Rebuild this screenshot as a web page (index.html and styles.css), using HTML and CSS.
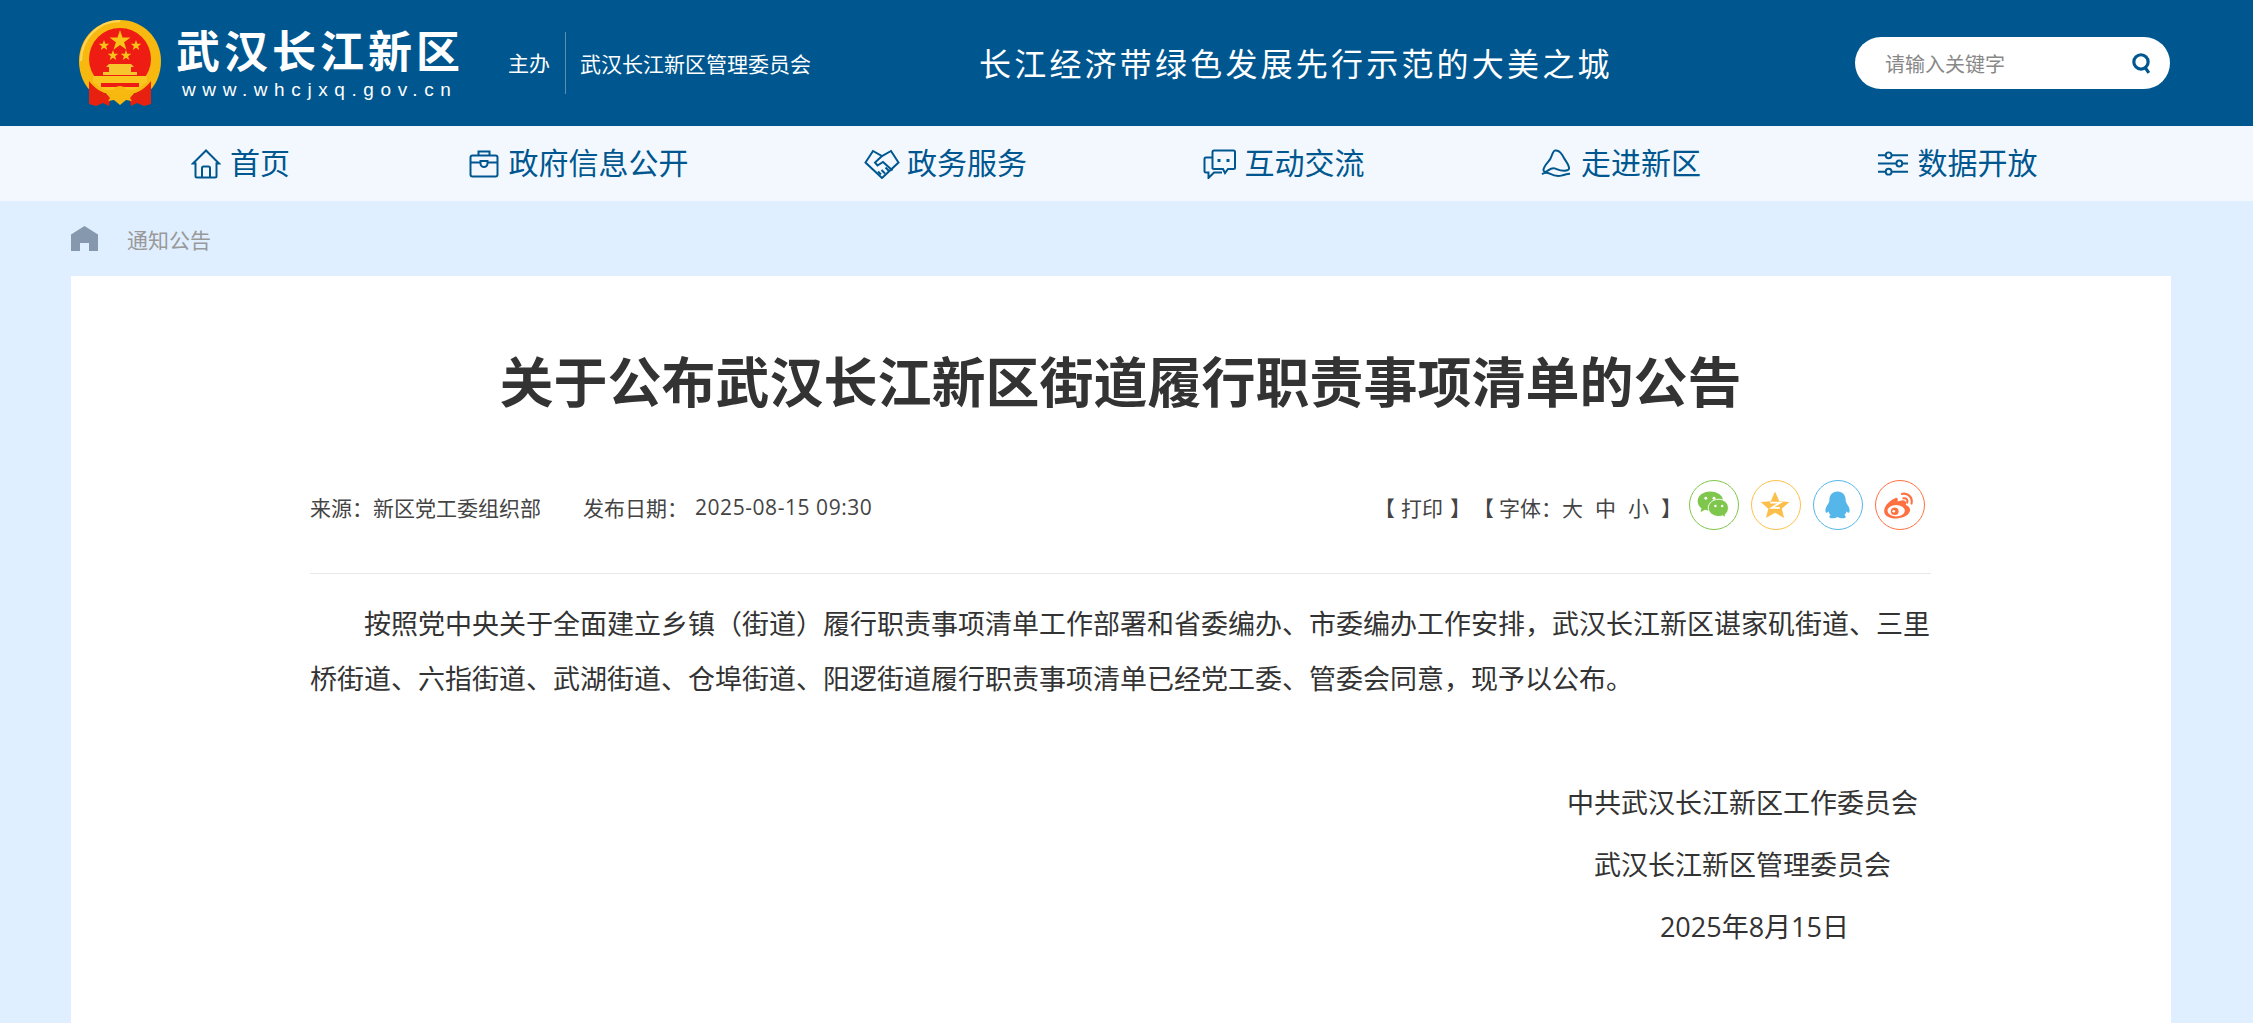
FILE: index.html
```html
<!DOCTYPE html>
<html lang="zh-CN">
<head>
<meta charset="UTF-8">
<title>关于公布武汉长江新区街道履行职责事项清单的公告</title>
<link rel="stylesheet" href="styles.css">
</head>
<body>
<div class="header">
	<svg class="emblem" viewBox="0 0 82 88">
		<path d="M41 1C18 1 0 19 0 42c0 13 5 25 14 32h54c9-7 14-19 14-32C82 19 64 1 41 1z" fill="#f7b90f"/>
		<path d="M41 2C19 2 2 20 2 42" fill="none" stroke="#ffd65a" stroke-width="2"/>
		<circle cx="41" cy="40" r="31" fill="#ee1c12"/>
		<path d="M41 11l2.500 7.500h8l-6.400 4.700 2.400 7.500-6.500-4.600-6.500 4.600 2.400-7.500-6.400-4.700h8z" fill="#f8c418"/>
		<path d="M25 21l1.300 3.800h4l-3.200 2.400 1.200 3.800-3.300-2.300-3.300 2.300 1.200-3.800-3.200-2.400h4zM57 21l1.300 3.800h4l-3.200 2.400 1.200 3.800-3.300-2.300-3.300 2.300 1.200-3.800-3.200-2.400h4zM34 31l1.300 3.800h4l-3.200 2.400 1.200 3.800-3.300-2.300-3.300 2.300 1.200-3.800-3.200-2.400h4zM47 31l1.300 3.800h4l-3.200 2.400 1.200 3.800-3.300-2.300-3.300 2.300 1.200-3.800-3.200-2.400h4z" fill="#f8c418"/>
		<path d="M30 45h22l3 3h-3v5h6v3H24v-3h6v-5h-3z" fill="#f9c52c"/>
		<path d="M14 57h54v6c-4 3-8 6-12 8H26c-4-2-8-5-12-8z" fill="#fbc51f"/>
		<path d="M22 64H60v4H22z" fill="#ee1c12"/>
		<path d="M10 62c5 7 13 12 22 14l-2 11-6-3-7 3-7-2z" fill="#e8200f"/>
		<path d="M72 62c-5 7-13 12-22 14l2 11 6-3 7 3 7-2z" fill="#e8200f"/>
		<path d="M41 67c4 0 6 3 8 5l8 0-6 7 2 3-6-1-6 5-6-5-6 1 2-3-6-7 8 0c2-2 4-5 8-5z" fill="#f7b90f"/>
	</svg>
	<div class="logo">
		<div class="logo-name">武汉长江新区</div>
		<div class="logo-url">www.whcjxq.gov.cn</div>
	</div>
	<div class="sponsor">
		<span class="sponsor-label">主办</span>
		<span class="sponsor-name">武汉长江新区管理委员会</span>
	</div>
	<div class="slogan">长江经济带绿色发展先行示范的大美之城</div>
	<div class="search">
		<span class="search-text">请输入关键字</span>
		<svg class="search-icon" viewBox="0 0 20 20"><circle cx="9.500" cy="8.500" r="6.800" fill="none" stroke="#00578f" stroke-width="3"/><path d="M13.500 14l3.500 5" stroke="#00578f" stroke-width="3" fill="none"/></svg>
	</div>
</div>

<div class="nav">
	<a class="nav-item">
		<svg class="nav-icon icon-home" viewBox="0 0 30 30"><path d="M15 1.500L2 14.500l2.500 0V27a1.500 1.500 0 0 0 1.500 1.500h18a1.500 1.500 0 0 0 1.500-1.500V14.500l2.500 0zM11 28.500V19a1.500 1.500 0 0 1 1.500-1.500h5A1.500 1.500 0 0 1 19 19v9.500"/></svg>
		<span class="nav-text">首页</span>
	</a>
	<a class="nav-item">
		<svg class="nav-icon icon-case" viewBox="0 0 30 30"><rect x="1.500" y="6.500" width="27" height="21" rx="2"/><path d="M9.500 6.500V2.500h11v4M1.500 13.500h10M18.500 13.500h10"/><path d="M11.500 12h7v2.500a3.500 3.500 0 0 1-7 0z"/></svg>
		<span class="nav-text">政府信息公开</span>
	</a>
	<a class="nav-item">
		<svg class="nav-icon icon-hand" viewBox="0 0 36 30"><path d="M18 29L1.500 13.500 9 2l9 5 9-5 7.500 11.500z"/><path d="M18 7l-7 6.500 2.500 3 5.500-3.500 9.500 8.500M17 25.500l-3-3M21 24.500l-3.500-3.500M25 22l-3.500-3.500"/></svg>
		<span class="nav-text">政务服务</span>
	</a>
	<a class="nav-item">
		<svg class="nav-icon icon-talk" viewBox="0 0 33 30"><path d="M9.500 8.500H3a1.500 1.500 0 0 0-1.500 1.500v12A1.500 1.500 0 0 0 3 23.500h2.500v5.500l5.500-5.500h8"/><path d="M9.500 20V3A1.500 1.500 0 0 1 11 1.500h19.500A1.500 1.500 0 0 1 32 3v15.500a1.500 1.500 0 0 1-1.500 1.500H25l-3 4-2-4H11a1.500 1.500 0 0 1-1.500-1.500"/><path d="M16 10v3M25 10v3" stroke-width="3"/></svg>
		<span class="nav-text">互动交流</span>
	</a>
	<a class="nav-item">
		<svg class="nav-icon icon-hill" viewBox="0 0 32 31"><path d="M15 1.500c-2 0-3 5-5 9-2 3-6 6-7 11 0 2 2 2.500 3.500 1.500 3-2 5-4 8-3 3 1 5 2.500 10 2.500 3 0 5-1 5-2.500 0-4-4-8-6-12-2-3-3-7-8.500-6.500z"/><path d="M1.500 26c3-2 5-2 8-.5s8 3 12 2 6-2 9-2"/></svg>
		<span class="nav-text">走进新区</span>
	</a>
	<a class="nav-item">
		<svg class="nav-icon icon-tune" viewBox="0 0 33 25"><path d="M1 4h8M15 4h17M1 12.500h19M26 12.500h6M1 21h8M15 21h17"/><circle cx="12" cy="4" r="3"/><circle cx="23" cy="12.500" r="3"/><circle cx="12" cy="21" r="3"/></svg>
		<span class="nav-text">数据开放</span>
	</a>
</div>

<div class="crumb">
	<svg class="crumb-home" viewBox="0 0 27 25"><path d="M13.500 0L0 8.500V25h9v-8h9v8h9V8.500z" fill="#8598ae"/></svg>
	<span class="crumb-text">通知公告</span>
</div>

<div class="card">
	<h1 class="title">关于公布武汉长江新区街道履行职责事项清单的公告</h1>
	<div class="meta">
		<span class="meta-from">来源：新区党工委组织部</span>
		<span class="meta-date">发布日期：</span>
		<span class="meta-time">2025-08-15 09:30</span>
		<div class="tools">
			<span class="tool-group">【<i class="tool-print">打印</i>】</span>
			<span class="tool-group">【<i class="tool-font">字体：</i><i class="tool-size">大</i><i class="tool-size">中</i><i class="tool-size">小</i>】</span>
		</div>
		<div class="share">
			<a class="share-btn share-wx">
				<svg viewBox="0 0 50 50"><path d="M21 11c-7.500 0-13 4.500-13 10 0 3 1.500 5.500 4 7.500l-1 4 4.500-2.500c2 .7 4 1 6 1 7 0 13-4.500 13-10s-5.500-10-13.500-10z" fill="#7fc64c"/><path d="M30 19c-6 0-11 4-11 9s5 9 11 9c1.500 0 3-.3 4-.7l3.500 2-1-3.300c2.500-1.500 3.500-4.500 3.500-7 0-5-4.500-9-10-9z" fill="#7fc64c" stroke="#fff" stroke-width="1"/><circle cx="16.500" cy="18" r="1.500" fill="#fff"/><circle cx="25" cy="18" r="1.500" fill="#fff"/><circle cx="26.500" cy="26" r="1.300" fill="#fff"/><circle cx="33.500" cy="26" r="1.300" fill="#fff"/></svg>
			</a>
			<a class="share-btn share-qz">
				<svg viewBox="0 0 50 50"><path d="M24 11l4.500 10 10.500 1-8 7 2.500 9.500L24 33l-9.500 5.500L17 29l-8-7 10.500-1z" fill="#fdbf4b"/><path d="M19 22.500h10.500L20.500 28h8.500" fill="none" stroke="#fff" stroke-width="1.800"/></svg>
			</a>
			<a class="share-btn share-qq">
				<svg viewBox="0 0 50 50"><path d="M24.500 11c-5.500 0-8.500 4-8.500 9 0 2-1.500 4-3 6.500-1.500 3-1.500 6 0 6.500 1 .3 1.500-.8 2-1.500.5 2 1.500 3.500 2.500 4-1.500.7-2 2-1 2.800 1.500 1 6 .5 8-.8 2 1.300 6.500 1.800 8 .8 1-.8.500-2.100-1-2.800 1-.5 2-2 2.500-4 .5.7 1 1.800 2 1.500 1.500-.5 1.500-3.500 0-6.500-1.500-2.500-3-4.500-3-6.500 0-5-3-9-8.500-9z" fill="#55b6ea"/></svg>
			</a>
			<a class="share-btn share-wb">
				<svg viewBox="0 0 50 50"><path d="M20 18c-5 1.500-12 8-11.500 14 .5 5 7 7.500 13.500 7 7-.5 13.500-4 13.500-9 0-3-3-4.500-4.500-5 1-2.500 0-5-3-5-2 0-4 1-5.500 1.500.8-3-.5-5-2.500-3.500z" fill="#ff7040"/><ellipse cx="21" cy="31" rx="9" ry="6" fill="#fff"/><circle cx="19.500" cy="31.500" r="4" fill="#ff7040"/><circle cx="18.500" cy="31.500" r="1.400" fill="#fff"/><path d="M27 13.500c6-1.500 11.500 3.500 10 10M28.500 18c3-.5 5 1.500 4 4.500" fill="none" stroke="#ff7040" stroke-width="2.200" stroke-linecap="round"/></svg>
			</a>
		</div>
	</div>
	<div class="content">
		<p class="para">按照党中央关于全面建立乡镇（街道）履行职责事项清单工作部署和省委编办、市委编办工作安排，武汉长江新区谌家矶街道、三里桥街道、六指街道、武湖街道、仓埠街道、阳逻街道履行职责事项清单已经党工委、管委会同意，现予以公布。</p>
		<div class="sign">
			<p class="sign-1">中共武汉长江新区工作委员会</p>
			<p class="sign-2">武汉长江新区管理委员会</p>
			<p class="sign-3">2025年8月15日</p>
		</div>
	</div>
</div>
</body>
</html>
```

FILE: styles.css
```css
* {
	box-sizing: border-box;
}
html, body {
	margin: 0;
	padding: 0;
}
body {
	background: #dfefff;
	font-family: "Open Sans", "Noto Sans CJK SC", sans-serif;
	color: #333;
}
p, h1 {
	margin: 0;
}
i {
	font-style: normal;
}

.header {
	display: flex;
	align-items: center;
	height: 126px;
	padding-left: 79px;
	background: #00578f;
	color: #fff;
}
.emblem {
	width: 82px;
	height: 88px;
	flex: none;
}
.logo {
	margin-left: 15px;
	width: 291px;
}
.logo-name {
	font-family: "Noto Sans CJK SC", serif;
	font-size: 44px;
	font-weight: 700;
	line-height: 46px;
	letter-spacing: 4px;
	white-space: nowrap;
}
.logo-url {
	margin-top: 7px;
	margin-left: 6px;
	font-family: "Liberation Sans", sans-serif;
	font-size: 19px;
	line-height: 22px;
	letter-spacing: 6.6px;
	white-space: nowrap;
}
.sponsor {
	display: flex;
	align-items: center;
	margin-left: 41px;
	font-size: 21px;
}
.sponsor-label {
	padding-right: 15px;
	line-height: 62px;
	border-right: 1px solid #5a8fb4;
}
.sponsor-name {
	padding-left: 14px;
}
.slogan {
	margin-left: 168px;
	margin-bottom: 2px;
	font-family: "Noto Sans CJK SC", serif;
	font-size: 32px;
	letter-spacing: 3.2px;
	white-space: nowrap;
}
.search {
	display: flex;
	align-items: center;
	justify-content: space-between;
	width: 315px;
	height: 52px;
	margin-left: auto;
	margin-right: 83px;
	padding: 0 18px 0 30px;
	background: #fff;
	border-radius: 26px;
}
.search-text {
	font-size: 20px;
	color: #888;
}
.search-icon {
	width: 21px;
	height: 21px;
}

.nav {
	display: flex;
	gap: 175.5px;
	align-items: center;
	height: 75px;
	padding-left: 191px;
	background: #f3f8ff;
}
.nav-item {
	display: flex;
	align-items: center;
	gap: 9px;
	font-size: 30px;
	color: #00578f;
	white-space: nowrap;
}
.nav-item:first-child {
	margin-right: 3px;
}
.nav-text {
	padding-bottom: 5px;
}
.nav-icon {
	height: 30px;
	width: 30px;
	fill: none;
	stroke: #00578f;
	stroke-width: 2;
}
.icon-case {
	margin-right: 1px;
}
.icon-hand {
	width: 36px;
	margin-right: -2px;
}
.icon-talk {
	width: 33px;
}
.icon-hill {
	width: 32px;
}
.icon-tune {
	width: 32px;
	height: 25px;
}

.crumb {
	display: flex;
	align-items: center;
	height: 75px;
	padding-left: 71px;
}
.crumb-home {
	width: 27px;
	height: 25px;
}
.crumb-text {
	margin-left: 29px;
	font-size: 21px;
	color: #999;
}

.card {
	width: 2100px;
	height: 747px;
	margin-left: 71px;
	padding: 0 240px 0 239px;
	background: #fff;
}
.title {
	padding-top: 65px;
	font-size: 54px;
	font-weight: 700;
	line-height: 82px;
	text-align: center;
	color: #333;
}
.meta {
	display: flex;
	align-items: center;
	height: 151px;
	padding: 17px 6px 0 0;
	font-size: 21px;
	color: #444;
	border-bottom: 1px solid #e8e8e8;
}
.meta-date {
	margin-left: 42px;
}
.meta-time {
	margin-left: 7px;
	letter-spacing: 0.55px;
}
.tools {
	display: flex;
	gap: 2px;
	margin-left: auto;
}
.tool-group {
	white-space: nowrap;
}
.tool-print {
	margin: 0 7px 0 6px;
}
.tool-font {
	margin-left: 5px;
}
.tool-size {
	margin-right: 12px;
}
.share {
	display: flex;
	gap: 12px;
	margin-left: 7px;
	margin-bottom: 4px;
}
.share-btn {
	width: 50px;
	height: 50px;
	border: 1px solid;
	border-radius: 50%;
}
.share-btn svg {
	display: block;
	width: 48px;
	height: 48px;
}
.share-wx {
	border-color: #7fc64c;
}
.share-qz {
	border-color: #fdbf4b;
}
.share-qq {
	border-color: #55b6ea;
}
.share-wb {
	border-color: #ff7040;
}

.content {
	padding-top: 22px;
	font-size: 27px;
	color: #333;
}
.para {
	line-height: 55px;
	text-indent: 54px;
}
.sign {
	margin-top: 66px;
	text-align: right;
}
.sign p {
	line-height: 62px;
}
.sign-1 {
	padding-right: 13px;
}
.sign-2 {
	padding-right: 40px;
}
.sign-3 {
	padding-right: 82px;
}
```
